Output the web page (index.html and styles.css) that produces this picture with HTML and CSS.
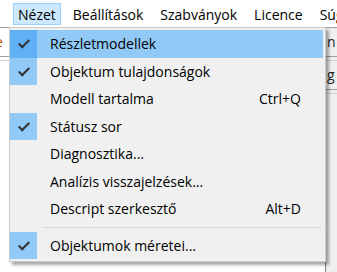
FILE: index.html
```html
<!DOCTYPE html>
<html lang="hu">
<head>
    <meta charset="UTF-8">
    <title>Nézet menü</title>
    <link rel="stylesheet" href="styles.css">
</head>
<body>

    <!-- menüsor -->
    <div class="menubar">
        <div class="menu-item open">Nézet</div>
        <div class="menu-item">Beállítások</div>
        <div class="menu-item">Szabványok</div>
        <div class="menu-item">Licence</div>
        <div class="menu-item">Súgó</div>
    </div>

    <!-- háttérben lévő ablak -->
    <div class="workspace">
        <div class="left-strip">
            <div class="strip-text">e</div>
            <div class="strip-line"></div>
        </div>
        <div class="right-strip">
            <div class="strip-text">n</div>
            <div class="strip-line"></div>
            <div class="strip-text">g</div>
            <div class="strip-line"></div>
        </div>
    </div>

    <!-- lenyíló menü -->
    <div class="dropdown">
        <div class="row active checked"><span class="check"></span><span class="label">Részletmodellek</span><span class="key"></span></div>
        <div class="row checked"><span class="check"></span><span class="label">Objektum tulajdonságok</span><span class="key"></span></div>
        <div class="row"><span class="check"></span><span class="label">Modell tartalma</span><span class="key">Ctrl+Q</span></div>
        <div class="row checked"><span class="check"></span><span class="label">Státusz sor</span><span class="key"></span></div>
        <div class="row"><span class="check"></span><span class="label">Diagnosztika...</span><span class="key"></span></div>
        <div class="row"><span class="check"></span><span class="label">Analízis visszajelzések...</span><span class="key"></span></div>
        <div class="row"><span class="check"></span><span class="label">Descript szerkesztő</span><span class="key">Alt+D</span></div>
        <div class="separator"></div>
        <div class="row checked"><span class="check"></span><span class="label">Objektumok méretei...</span><span class="key"></span></div>
    </div>

</body>
</html>
```

FILE: styles.css
```css
body {
    margin: 0;
    width: 337px;
    height: 272px;
    overflow: hidden;
    background: #fff;
    font-family: 'Open Sans', 'Noto Sans', sans-serif;
    font-size: 14px;
    color: #000;
    position: relative;
}

/* menüsor */
.menubar {
    display: flex;
    height: 27px;
    padding-left: 13px;
    padding-top: 3px;
    box-sizing: border-box;
    white-space: nowrap;
    overflow: hidden;
}

.menu-item {
    flex-shrink: 0;
    padding: 0 4px;
    margin-right: 7px;
    height: 22px;
    line-height: 21px;
    border: 1px solid transparent;
    box-sizing: border-box;
}

.menu-item.open {
    background: #cce8ff;
    border-color: #99d1ff;
}

/* háttér ablak */
.workspace {
    display: flex;
    justify-content: space-between;
    height: 245px;
    border-top: 1px solid #a0a0a0;
}

.left-strip {
    width: 9px;
    overflow: hidden;
    background: #fff;
}

.right-strip {
    width: 11px;
    overflow: hidden;
    border-left: 1px solid #808080;
    background: #f0f0f0;
}

.strip-text {
    height: 28px;
    line-height: 28px;
    margin-left: 1px;
    color: #222;
}

.left-strip .strip-text {
    margin-left: -5px;
    color: #c05000;
}

.strip-line {
    height: 3px;
    border-top: 1px solid #a0a0a0;
    border-bottom: 1px solid #d0d0d0;
}

/* lenyíló menü */
.dropdown {
    position: absolute;
    left: 9px;
    top: 27px;
    width: 317px;
    padding: 2px 2px 2px 0;
    background: #f0f0f0;
    border: 1px solid #cccccc;
    box-sizing: border-box;
    box-shadow: 3px 3px 3px rgba(0, 0, 0, 0.35);
}

.row {
    display: flex;
    align-items: center;
    height: 27.5px;
}

.row.active {
    background: #91c9f7;
}

.check {
    width: 27px;
    height: 100%;
    margin-right: 13px;
    position: relative;
}

.checked .check {
    background: #91c9f7;
}

.active .check {
    background: #5fb0f5;
}

.checked .check::after {
    content: "";
    position: absolute;
    left: 11px;
    top: 7px;
    width: 4px;
    height: 9px;
    border-right: 2px solid #333;
    border-bottom: 2px solid #333;
    transform: rotate(45deg);
}

.label {
    flex: 1;
    white-space: nowrap;
}

.key {
    padding-right: 22px;
}

.separator {
    height: 1px;
    margin: 4px 2px 4px 33px;
    background: #d7d7d7;
}
```
